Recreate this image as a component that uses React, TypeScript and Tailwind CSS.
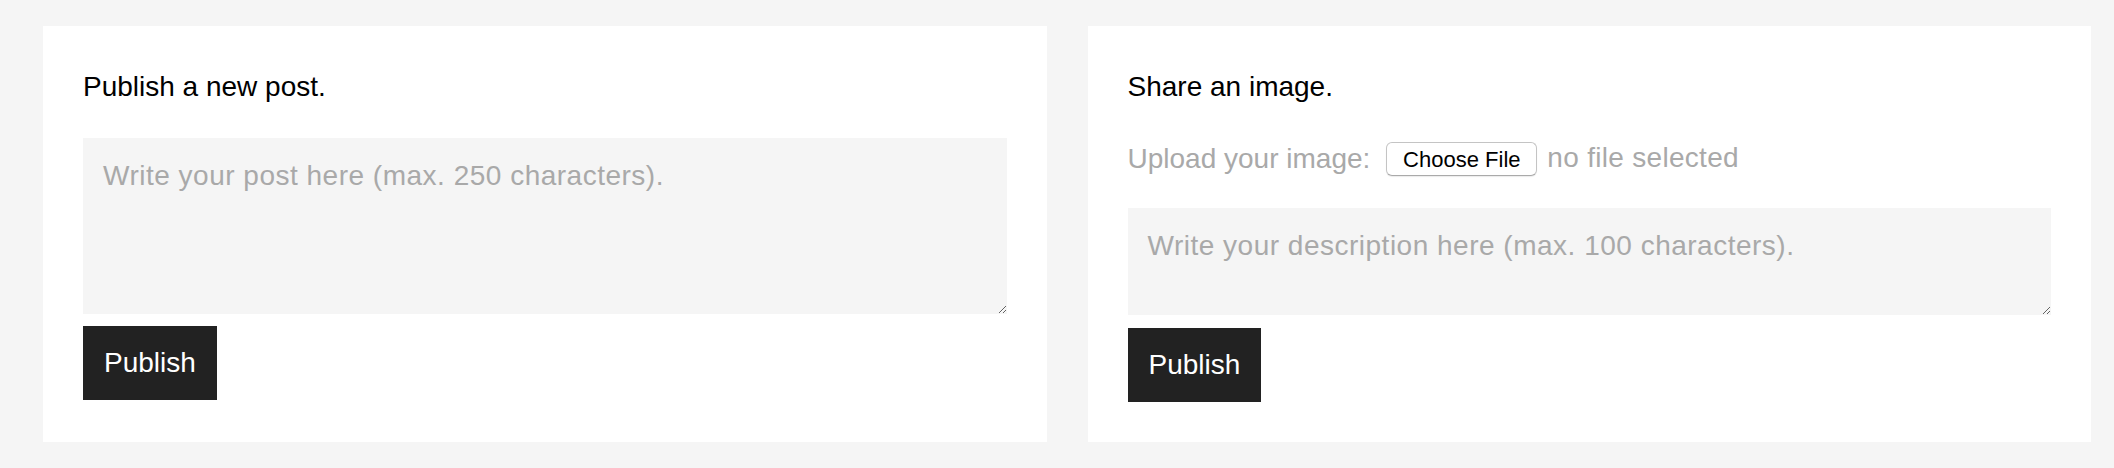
export default function App() {
  return (
    <div className="min-h-screen bg-[#f5f5f5] pt-[26px] pb-[26px] pl-[43px] pr-[23px] font-['Liberation_Sans',Arial,sans-serif]">
      <div className="flex items-stretch gap-[41px]">
        {/* Post card */}
        <div className="flex-1 bg-white pt-[45px] pb-[40px] px-[40px]">
          <h2 className="text-[28px] leading-[32px] text-black">
            Publish a new post.
          </h2>
          <textarea
            className="block mt-[35px] w-full h-[176px] bg-[#f5f5f5] border-0 outline-none px-5 pt-[22px] text-[28px] leading-[32px] tracking-[0.5px] text-black placeholder:text-[#a9a9a9]"
            placeholder="Write your post here (max. 250 characters)."
          />
          <button className="mt-[12px] h-[74px] px-[21px] bg-[#222222] text-white text-[28px] leading-[32px]">
            Publish
          </button>
        </div>

        {/* Image card */}
        <div className="flex-1 bg-white pt-[45px] pb-[40px] px-[40px]">
          <h2 className="text-[28px] leading-[32px] text-black">
            Share an image.
          </h2>
          <div className="mt-[39px] flex items-center h-[34px]">
            <span className="text-[28px] leading-[32px] text-[#a9a9a9]">
              Upload your image:
            </span>
            <span className="ml-[16px] h-[34px] w-[151px] flex items-center justify-center rounded-[6px] border border-[#c4c4c4] border-b-[#aaaaaa] bg-white text-[22px] text-black shadow-[0_1px_1px_rgba(0,0,0,0.08)]">
              Choose File
            </span>
            <span className="ml-[10px] -mt-[2px] text-[28px] leading-[32px] tracking-[0.3px] text-[#a9a9a9]">
              no file selected
            </span>
          </div>
          <textarea
            className="block mt-[32px] w-full h-[107px] bg-[#f5f5f5] border-0 outline-none px-5 pt-[22px] text-[28px] leading-[32px] tracking-[0.5px] text-black placeholder:text-[#a9a9a9]"
            placeholder="Write your description here (max. 100 characters)."
          />
          <button className="mt-[13px] h-[74px] px-[21px] bg-[#222222] text-white text-[28px] leading-[32px]">
            Publish
          </button>
        </div>
      </div>
    </div>
  );
}
